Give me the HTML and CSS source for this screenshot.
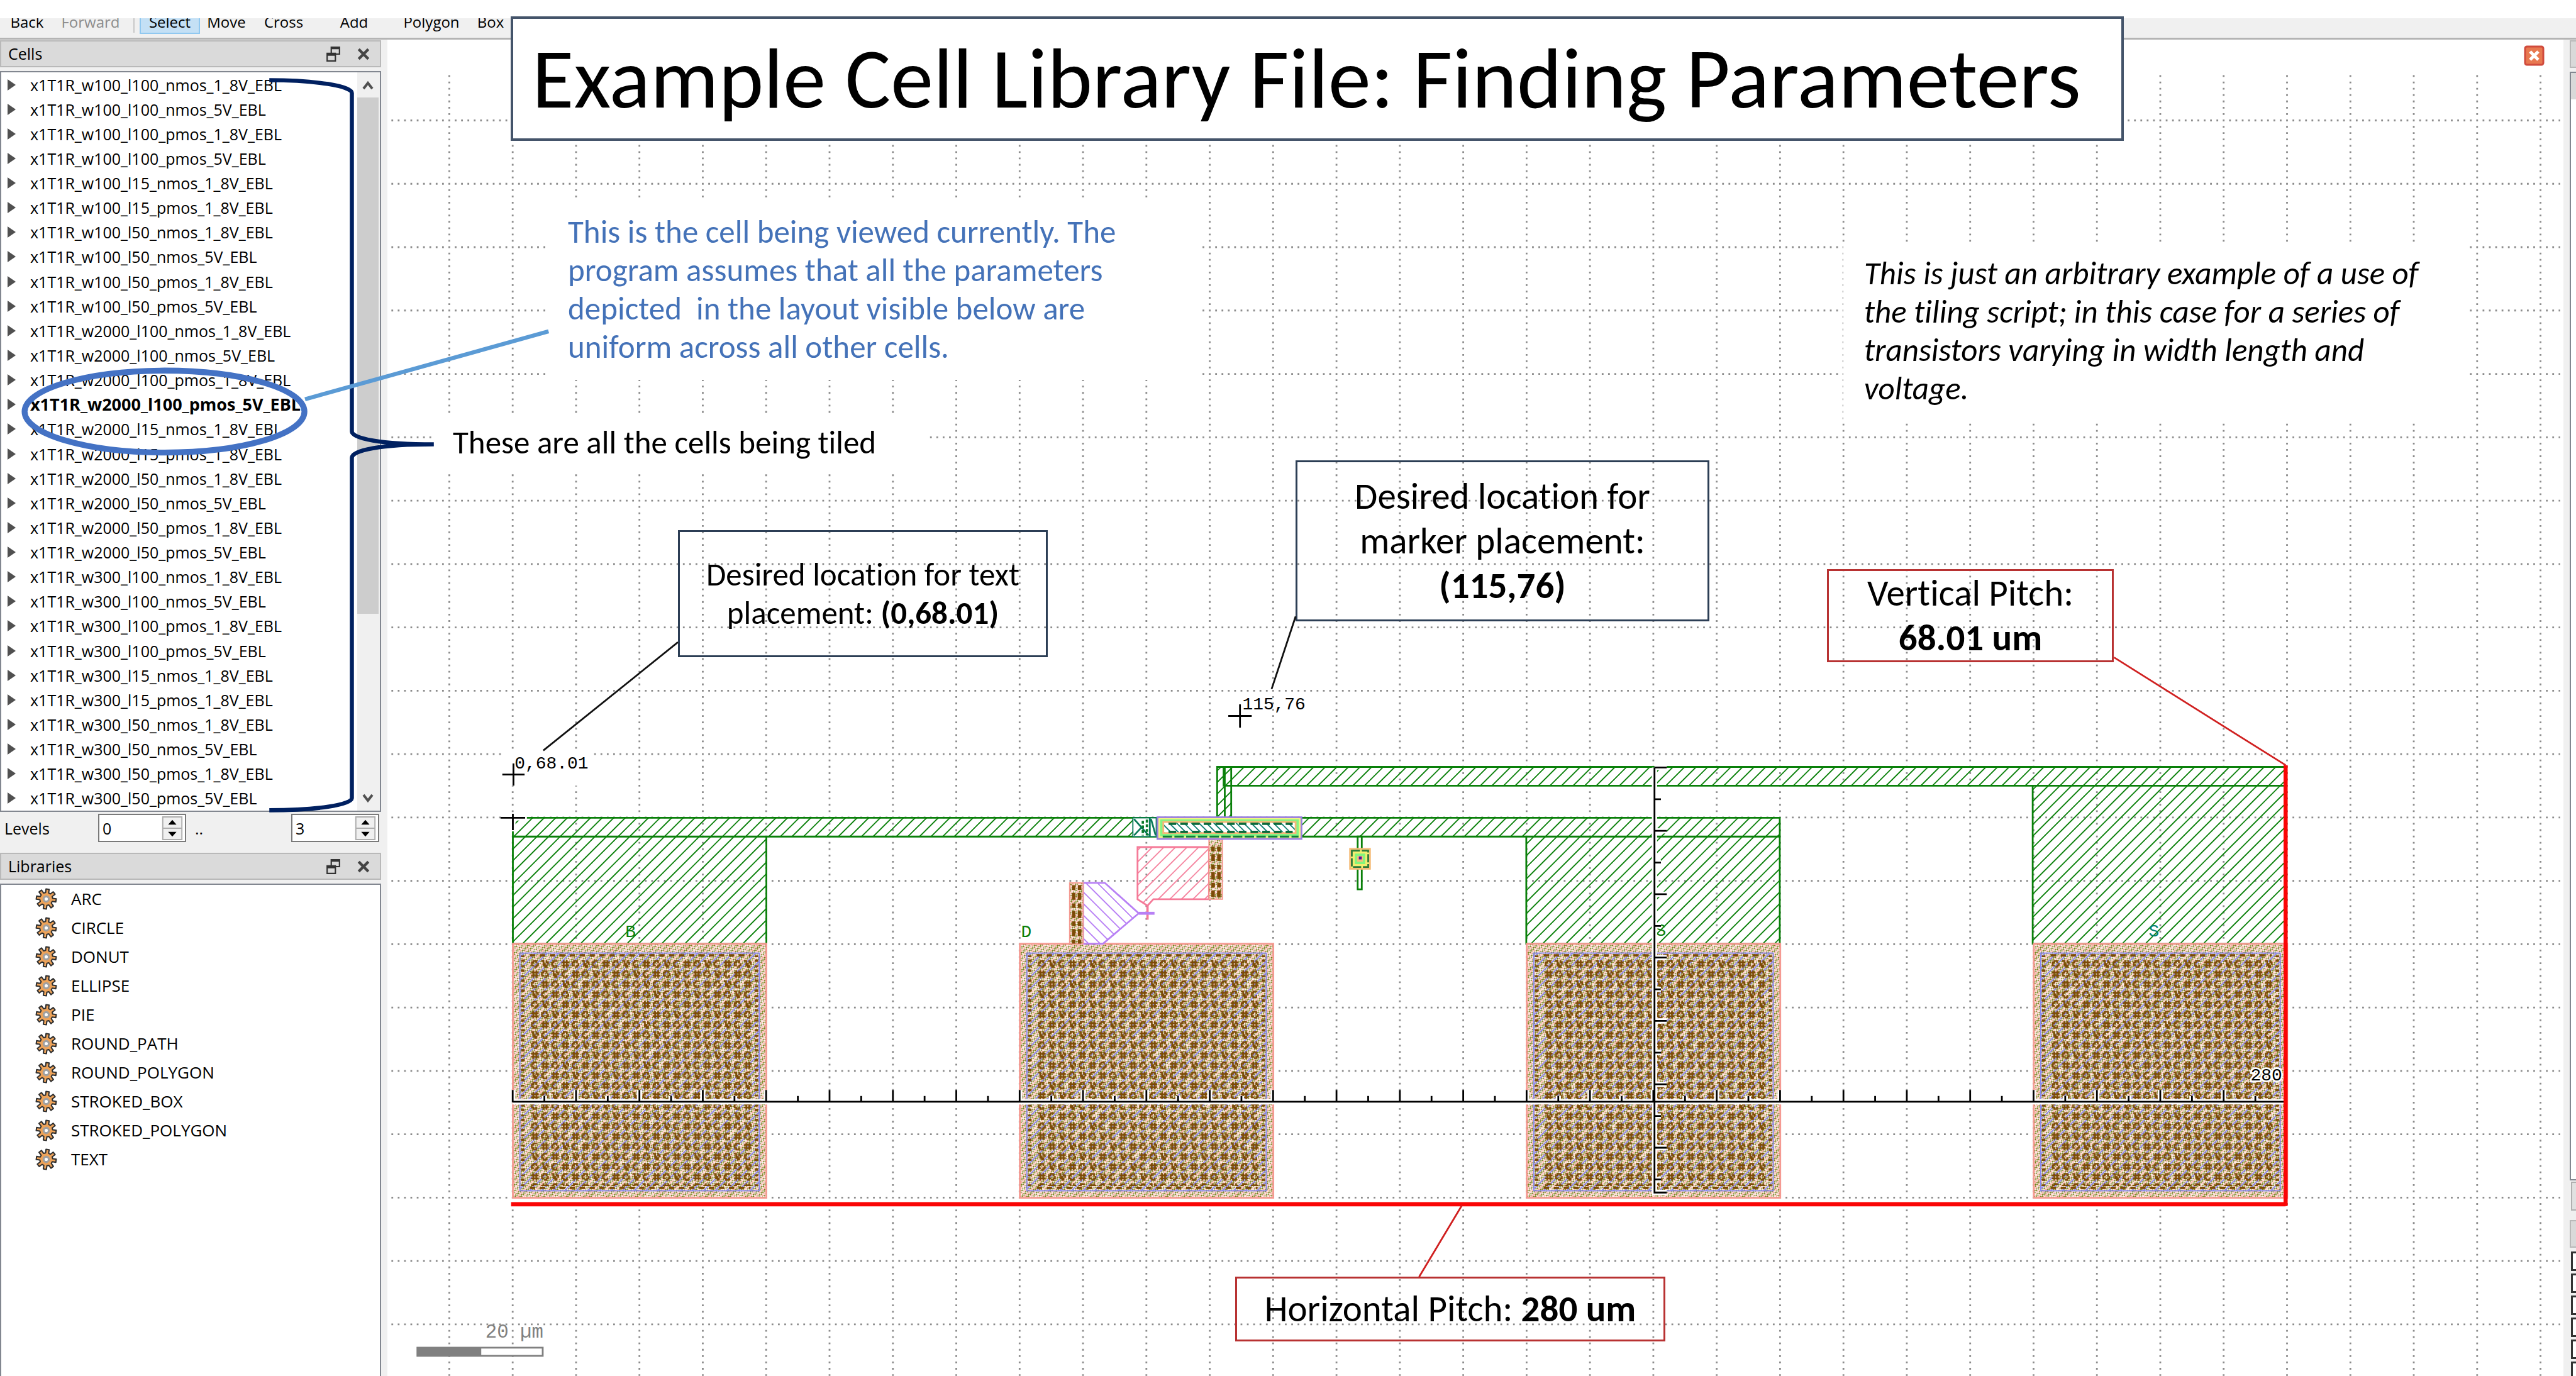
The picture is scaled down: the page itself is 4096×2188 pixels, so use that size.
FILE: index.html
```html
<!DOCTYPE html>
<html lang="en">
<head>
<meta charset="utf-8">
<title>Example Cell Library File: Finding Parameters</title>
<link rel="stylesheet" href="styles.css">
</head>
<body>
<svg class="symbols" aria-hidden="true">
  <symbol id="restore" viewBox="0 0 20 22"><path d="M7 1H19V11H7ZM7 3H19" fill="none" stroke="#333" stroke-width="2"/><path d="M1 10H13V21H1Z" fill="#dadada" stroke="#333" stroke-width="2"/><path d="M1 12H13" stroke="#333" stroke-width="3"/></symbol>
  <symbol id="cross" viewBox="0 0 20 20"><path d="M3 3L17 17M17 3L3 17" fill="none" stroke="#444" stroke-width="4"/></symbol>
  <symbol id="gear" viewBox="-17 -17 34 34"><path id="gear-path" fill="#eda35a" stroke="#2f2f2f" stroke-width="2" stroke-linejoin="round"/><circle r="4" fill="#fff" stroke="#a0a0a0" stroke-width="3"/></symbol>
</svg>

<div class="page">
  <header class="toolbar">
    <button>Back</button><button class="muted">Forward</button><span class="sep"></span><button class="active">Select</button><button>Move</button><button>Cross</button><button>Add</button><button>Polygon</button><button>Box</button>
  </header>

  <div class="main">
    <aside class="sidebar">
      <div class="panel-head"><h2>Cells</h2><button aria-label="Float"><svg><use href="#restore"/></svg></button><button aria-label="Close"><svg><use href="#cross"/></svg></button></div>
      <div class="cells">
        <ul id="cell-list"></ul>
        <div class="scrollbar">
          <svg viewBox="0 0 34 40"><path d="M10 26L17 17L24 26" /></svg>
          <span class="thumb"></span>
          <svg viewBox="0 0 34 40"><path d="M10 15L17 24L24 15" /></svg>
        </div>
      </div>
      <div class="levels">
        <label for="from">Levels</label>
        <span class="spin"><input id="from" value="0"><svg viewBox="0 0 34 40"><path class="box" d="M1 1H33V39H1ZM1 20H33"/><path d="M10 14L17 6L24 14ZM10 26L17 34L24 26Z"/></svg></span>
        <label for="to">..</label>
        <span class="spin"><input id="to" value="3"><svg viewBox="0 0 34 40"><path class="box" d="M1 1H33V39H1ZM1 20H33"/><path d="M10 14L17 6L24 14ZM10 26L17 34L24 26Z"/></svg></span>
      </div>
      <div class="panel-head"><h2>Libraries</h2><button aria-label="Float"><svg><use href="#restore"/></svg></button><button aria-label="Close"><svg><use href="#cross"/></svg></button></div>
      <ul class="libs" id="lib-list"></ul>
    </aside>

    <main class="canvas"></main>

    <aside class="dock">
      <span class="dock-head"></span>
      <span class="dock-list"></span>
      <span class="dock-button"></span>
      <span class="dock-head"></span>
      <span class="swatch"></span><span class="swatch"></span><span class="swatch"></span><span class="swatch"></span><span class="swatch"></span><span class="swatch"></span>
    </aside>
  </div>

  <svg class="layer" viewBox="0 0 4400 2350" id="layout">
    <defs>
      <pattern id="hatch" width="14" height="14" patternUnits="userSpaceOnUse" patternTransform="rotate(45)"><path d="M7 0V14" stroke="#0a800a" stroke-width="2"/></pattern>
      <pattern id="hatch-pink" width="14" height="14" patternUnits="userSpaceOnUse" patternTransform="rotate(45)"><path d="M7 0V14" stroke="#f585a0" stroke-width="2"/></pattern>
      <pattern id="hatch-purple" width="14" height="14" patternUnits="userSpaceOnUse" patternTransform="rotate(-45)"><path d="M7 0V14" stroke="#b880f5" stroke-width="2"/></pattern>
      <pattern id="metal" width="7" height="4" patternUnits="userSpaceOnUse" patternTransform="rotate(45)"><rect width="7" height="4" fill="#fff5f0"/><path d="M0 0H2V2H0ZM2 2H4V4H2Z" fill="#76801a"/><path d="M4 0H5V2H4ZM5 2H7V4H5Z" fill="#fba49c"/></pattern>
      <pattern id="via-stripe" width="14" height="4" patternUnits="userSpaceOnUse" patternTransform="rotate(45)"><path d="M6 0V4" stroke="#8a8af0" stroke-width="2"/></pattern>
      <pattern id="vias" x="905" y="1638" width="69.28" height="69.28" patternUnits="userSpaceOnUse"><path id="via-path" fill="#7c4a06"/></pattern>
      <pattern id="teal" width="9" height="9" patternUnits="userSpaceOnUse" patternTransform="rotate(-45)"><path d="M4 0V9" stroke="#108070" stroke-width="2"/></pattern>
    </defs>
    <path id="grid" class="grid"/>
    <g class="metal">
      <path d="M876 1397H3040V1429H876ZM876 1429H1309V1612H876ZM2607 1429H3040V1612H2607ZM2090 1310H3904V1342H2090ZM3472 1342H3904V1612H3472ZM2079 1310H2103V1397H2079ZM2092 1310V1397"/>
      <path d="M2319 1429H2326V1519H2319Z" fill="#fff"/>
    </g>
    <g id="pads"></g>
    <path d="M1943 1447H2065V1536H1970L1960 1547L1943 1536Z" fill="url(#hatch-pink)" stroke="#f57a98" stroke-width="3"/>
    <path d="M1850 1508H1887L1945 1560L1884 1612H1850Z" fill="url(#hatch-purple)" stroke="#b880f5" stroke-width="3"/>
    <path d="M1960 1547V1571" stroke="#f57a98" stroke-width="4"/>
    <path d="M1945 1560H1972" stroke="#b880f5" stroke-width="5"/>
    <g stroke="#f59a92" stroke-width="2"><rect x="2065" y="1434" width="23" height="102" fill="url(#metal)"/><rect x="1827" y="1508" width="23" height="104" fill="url(#metal)"/></g>
    <g fill="none" stroke="#7c4a06" stroke-width="6" stroke-dasharray="8 5 12 6"><path d="M2072 1446V1532M2082 1446V1532M1834 1512V1612M1844 1512V1612"/></g>
    <rect x="1935" y="1397" width="40" height="32" fill="#fff" stroke="#0a7a5a" stroke-width="2"/>
    <path d="M1937 1399L1962 1427M1950 1413L1937 1427M1964 1397V1429M1966 1399L1974 1427" fill="none" stroke="#0a7a5a" stroke-width="3"/>
    <path d="M1952 1402V1427M1959 1400V1427" stroke="#0a7a2a" stroke-width="4" stroke-dasharray="5 3"/>
    <rect x="1977" y="1396" width="246" height="37" fill="#f3f384" stroke="#9a80e0" stroke-width="3"/>
    <rect x="1984" y="1402" width="232" height="24" fill="#fff" stroke="#84f584" stroke-width="5"/>
    <rect x="1987" y="1404" width="226" height="19" fill="url(#teal)" stroke="#f5b878" stroke-width="3"/>
    <path d="M1996 1407H2208M1996 1421H2208" stroke="#0a6a3a" stroke-width="4" stroke-dasharray="13 7"/>
    <path d="M1986 1429H2218" stroke="#0a803a" stroke-width="3" stroke-dasharray="16 4"/>
    <rect x="2306" y="1450" width="34" height="34" fill="#f3ee70" stroke="#f5bc78" stroke-width="3"/>
    <rect x="2309" y="1453" width="28" height="28" fill="none" stroke="#2a7a3a" stroke-width="3" stroke-dasharray="14 3"/>
    <rect x="2316" y="1460" width="14" height="14" fill="#f5c078" stroke="#84f57c" stroke-width="4"/>
    <rect x="2321" y="1463" width="5" height="5" fill="#5010a0"/>
    <g class="net"><text x="1068" y="1601">B</text><text x="1744" y="1601">D</text><text x="2828" y="1598">S</text><text x="3670" y="1600" fill="#008070">S</text></g>
    <path id="ruler-halo" fill="none" stroke="#fff" stroke-width="9"/>
    <path id="ruler" fill="none" stroke="#000" stroke-width="3"/>
    <rect x="862" y="1284" width="152" height="58" fill="#fff"/>
    <path d="M856 1397H900M876 1390V1420" stroke="#fff" stroke-width="9"/>
    <path d="M858 1323H896M877 1304V1342M855 1397H897M876 1390V1418M2098 1223H2138M2118 1203V1243" stroke="#000" stroke-width="3"/>
    <g class="mono"><text x="879" y="1313">0,68.01</text><text x="2122" y="1212">115,76</text><text class="halo" x="3844" y="1846">280</text><text class="scale" x="829" y="2285">20 µm</text></g>
    <rect x="713" y="2302" width="214" height="14" fill="#fff" stroke="#808080" stroke-width="3"/>
    <rect x="712" y="2301" width="110" height="16" fill="#808080"/>
    <path d="M873 2057H3904M3904 1307V2060" stroke="#fa0505" stroke-width="7"/>
  </svg>

  <button class="close-view" aria-label="Close view"><svg viewBox="0 0 33 33"><rect x="2" y="2" width="29" height="29" rx="3" fill="#e87850" stroke="#d04a3c" stroke-width="3"/><path d="M10 10L23 23M23 10L10 23" stroke="#fff" stroke-width="5"/></svg></button>

  <p class="note blue">This is the cell being viewed currently. The<br>program assumes that all the parameters<br>depicted&nbsp; in the layout visible below are<br>uniform across all other cells.</p>
  <p class="note tiled">These are all the cells being tiled</p>
  <p class="note example">This is just an arbitrary example of a use of<br>the tiling script; in this case for a series of<br>transistors varying in width length and<br>voltage.</p>
  <h1 class="title">Example Cell Library File: Finding Parameters</h1>
  <p class="callout text-at">Desired location for text<br>placement: <b>(0,68.01)</b></p>
  <p class="callout big marker-at">Desired location for<br>marker placement:<br><b>(115,76)</b></p>
  <p class="callout big red v-pitch">Vertical Pitch:<br><b>68.01 um</b></p>
  <p class="callout big red h-pitch">Horizontal Pitch: <b>280 um</b></p>

  <svg class="layer" viewBox="0 0 4400 2350" fill="none">
    <path d="M1158 1097L928 1282M2213 1053L2172 1177" stroke="#111" stroke-width="3"/>
    <path d="M3611 1123L3904 1307M2497 2059L2424 2181" stroke="#d02020" stroke-width="3"/>
    <path d="M460 137C540 137 601 147 601 159V737C601 749 650 759 741 759C650 759 601 769 601 782V1363C601 1375 540 1384 460 1384" stroke="#002060" stroke-width="7"/>
    <ellipse cx="281" cy="703" rx="239" ry="70" stroke="#4472c4" stroke-width="10"/>
    <path d="M521 682L937 566" stroke="#5b9bd5" stroke-width="7"/>
  </svg>
</div>
<script src="app.js"></script>
</body>
</html>
```
FILE: styles.css
```css
* { box-sizing: border-box; margin: 0; padding: 0; }
body { background: #fff; font-family: "Open Sans", "Noto Sans", sans-serif; font-size: 25px; color: #000; overflow: hidden; }
button { border: 0; background: none; font: inherit; color: inherit; }
ul { list-style: none; }
.symbols { position: absolute; width: 0; height: 0; }
.page { position: relative; display: flex; flex-direction: column; height: 100vh; padding-top: 29px; }

.toolbar {
  display: grid; grid-template-columns: 86px 116px 20px 96px 84px 98px 126px 120px 68px;
  align-content: end; height: 34px; flex: none; padding-bottom: 6px; overflow: hidden;
  background: #f0f0f0; border-bottom: 3px solid #b4b4b4; font-size: 24px; line-height: 33px;
}
.toolbar button { padding-bottom: 3px; }
.toolbar .muted { color: #8c8c8c; }
.toolbar .active { background: #c4e0f5; border: 2px solid #90c8f0; border-top: 0; padding-bottom: 1px; }
.toolbar .sep { width: 2px; height: 34px; margin-left: 10px; background: #c8c8c8; }

.main { display: grid; grid-template-columns: 606px 1fr 20px; flex: 1; min-height: 0; }
.sidebar { display: flex; flex-direction: column; padding-top: 1px; background: #f0f0f0; }
.panel-head {
  display: flex; align-items: center; gap: 26px; flex: none; height: 43px; margin-bottom: 6px; padding: 0 15px 0 11px;
  background: #dadada; border: 2px solid #b9b9b9;
}
.panel-head h2 { flex: 1; font-size: 25px; font-weight: 400; line-height: 39px; }
.panel-head button { display: flex; }
.panel-head svg { width: 22px; height: 24px; }

.cells { display: flex; flex: none; height: 1178px; background: #fff; border: 2px solid #828790; }
.cells ul { display: grid; grid-auto-rows: 1fr; flex: 1; }
.cells li { display: flex; align-items: center; white-space: nowrap; padding-left: 10px; gap: 23px; line-height: 36px; }
.cells li svg { width: 13px; height: 18px; flex: none; }
.cells .current { font-weight: 700; font-size: 27px; }
.scrollbar { display: flex; flex-direction: column; width: 36px; padding-right: 2px; background: #f0f0f0; }
.scrollbar svg { width: 34px; height: 40px; fill: none; stroke: #505050; stroke-width: 4px; }
.scrollbar .thumb { height: 821px; margin-bottom: auto; background: #cdcdcd; }

.levels { display: grid; grid-template-columns: 149px 140px 167px 140px; align-items: center; flex: none; height: 65px; padding: 0 0 14px 7px; }
.levels label + .spin + label { padding-left: 14px; }
.spin { display: flex; align-items: center; height: 45px; padding-right: 3px; background: #fff; border: 2px solid #7a7a7a; }
.spin input { flex: 1; min-width: 0; border: 0; padding-left: 5px; font: inherit; background: none; }
.spin svg { width: 34px; height: 38px; }
.spin .box { fill: #f0f0f0; stroke: #adadad; stroke-width: 2px; }

.libs { flex: 1; background: #fff; border: 2px solid #828790; border-bottom: 0; }
.libs li { display: flex; align-items: center; gap: 22px; height: 46px; padding: 0 0 2px 54px; font-size: 26px; }
.libs svg { width: 35px; height: 35px; }

.canvas { background: #fff; border-left: 10px solid #f0f0f0; }
.dock { display: flex; flex-direction: column; padding-left: 10px; padding-top: 1px; background: #f0f0f0; }
.dock-head { height: 44px; margin-bottom: 6px; background: #d9d9d9; border: 2px solid #b9b9b9; border-right: 0; flex: none; }
.dock-list { height: 1763px; flex: none; border: 2px solid #828790; border-right: 0; background: linear-gradient(#d9d9d9 42px, #fff 42px); }
.dock-button { height: 46px; margin: 2px 0 15px 2px; flex: none; background: #e1e1e1; border: 2px solid #b0b0b0; border-right: 0; }
.swatch { height: 31px; margin: 0 0 4px 2px; flex: none; background: #fff; border: 3px solid #333; border-right: 0; }

.layer { position: absolute; left: 0; top: 0; width: 100%; pointer-events: none; }
.grid { fill: none; stroke: #8c8c8c; stroke-width: 3px; }
.metal { fill: url(#hatch); stroke: #0a800a; stroke-width: 3px; }
.net, .mono { font-family: "Liberation Mono", monospace; font-size: 30px; }
.net { fill: #0a800a; }
.halo { paint-order: stroke; stroke: #fff; stroke-width: 6px; }
.scale { fill: #808080; font-size: 33px; }

.close-view { position: absolute; right: 50px; top: 72px; width: 33px; height: 33px; }

.note, .callout, .title { position: absolute; font-family: Calibri, Carlito, Lato, sans-serif; font-size: 51px; line-height: 61px; white-space: nowrap; font-variant-ligatures: none; }
.note { background: #fff; }
.blue { left: 867px; top: 321px; width: 1044px; height: 283px; padding: 17px 36px; color: #4472b8; }
.tiled { left: 689px; top: 657px; width: 788px; height: 97px; padding: 16px 31px; }
.example { left: 2931px; top: 385px; width: 994px; height: 284px; padding: 19px 33px; font-style: italic; }
.title { left: 812px; top: 26px; width: 2565px; height: 198px; padding: 12px 30px; background: #fff; border: 4px solid #44546a; font-size: 136px; line-height: 166px; font-weight: 400; }
.callout { text-align: center; border: 3px solid #2c3e55; }
.big { font-size: 59px; line-height: 71px; }
.red { border-color: #b83232; }
.text-at { left: 1078px; top: 843px; width: 588px; padding: 37px 0; }
.marker-at { left: 2060px; top: 732px; width: 658px; padding: 19px 0 18px; }
.v-pitch { left: 2905px; top: 905px; width: 456px; }
.h-pitch { left: 1964px; top: 2030px; width: 684px; padding: 13px 0; }
```
FILE: app.js
```javascript
const el = id => document.getElementById(id);

// Cell tree
const variants = ['l100_nmos_1_8V', 'l100_nmos_5V', 'l100_pmos_1_8V', 'l100_pmos_5V', 'l15_nmos_1_8V',
  'l15_pmos_1_8V', 'l50_nmos_1_8V', 'l50_nmos_5V', 'l50_pmos_1_8V', 'l50_pmos_5V'];
const current = 'x1T1R_w2000_l100_pmos_5V_EBL';
const arrow = '<svg viewBox="0 0 13 18"><path d="M0 0L13 9L0 18Z" fill="#505050"/></svg>';
el('cell-list').innerHTML = ['w100', 'w2000', 'w300'].flatMap(w => variants.map(v => `x1T1R_${w}_${v}_EBL`))
  .map(n => `<li${n === current ? ' class="current"' : ''}>${arrow}<span>${n}</span></li>`).join('');

// Library list
el('lib-list').innerHTML = ['ARC', 'CIRCLE', 'DONUT', 'ELLIPSE', 'PIE', 'ROUND_PATH', 'ROUND_POLYGON',
  'STROKED_BOX', 'STROKED_POLYGON', 'TEXT']
  .map(n => `<li><svg><use href="#gear"/></svg><span>${n}</span></li>`).join('');

// Gear outline with eight teeth
let gear = '';
for (let i = 0; i < 8; i++) {
  [[-14, 10], [-9, 15.5], [9, 15.5], [14, 10]].forEach(([d, r], k) => {
    const a = (i * 45 + d + 8) * Math.PI / 180;
    gear += (i + k ? 'L' : 'M') + (r * Math.cos(a)).toFixed(1) + ' ' + (r * Math.sin(a)).toFixed(1);
  });
}
el('gear-path').setAttribute('d', gear + 'Z');

// Dotted grid: a line every 10 um, a dot every 1 um
const um = 10.824, x0 = 875.7, y0 = 205.7;
let grid = '';
for (let k = -1; k <= 32; k++) grid += `M${x0 + k * 10 * um} ${y0 - 7 * um - 1.5}V2350`;
for (let k = 0; k <= 19; k++) grid += `M${x0 - 19 * um - 1.5} ${y0 + k * 10 * um}H4373`;
el('grid').setAttribute('d', grid);
el('grid').setAttribute('stroke-dasharray', `3 ${um - 3}`);

// Rulers
let ruler = 'M875 1882H3904M2826 1311V2037H2847';
for (let k = 0; k <= 55; k++) ruler += `M${x0 + k * 5 * um} 1882V${k % 2 ? 1872 : 1862}`;
for (let k = 0; k <= 13; k++) ruler += `M2826 ${1311 + k * 5 * um}H${k % 2 ? 2837 : 2847}`;
el('ruler').setAttribute('d', ruler);
el('ruler-halo').setAttribute('d', ruler);

// Via array: small contact shapes repeated over every pad
const shapes = ['01110 11010 10001 11011 00110', '01010 11111 01010 11111 01010', '01110 11000 10000 11010 01110', '11010 01011 01101 01110 00110'];
let via = '';
for (let i = 0; i < 16; i++) {
  const rows = shapes[(i * 3 + (i >> 2)) % 4].split(' ');
  const cx = (i % 4) * 17.32 + 2, cy = (i >> 2) * 17.32 + 2;
  rows.forEach((r, y) => [...r].forEach((b, x) => { if (b === '1') via += `M${cx + x * 2.6} ${cy + y * 2.6}h2.8v2.8h-2.8z`; }));
}
el('via-path').setAttribute('d', via);
el('pads').innerHTML = [0, 80, 160, 240].map(p => `<g transform="translate(${p * um} 0)">
  <rect x="876" y="1612" width="433" height="434" fill="url(#metal)" stroke="#f59a92" stroke-width="3"/>
  <rect x="888" y="1628" width="409" height="406" fill="url(#via-stripe)"/>
  <path d="M893 1632V2030M1292 1632V2030" stroke="#7c4a06" stroke-width="6" stroke-dasharray="3 4 4 6"/>
  <path d="M905 1632H1282M905 2029H1282" stroke="#7c4a06" stroke-width="4" stroke-dasharray="9 8"/>
  <rect x="905" y="1638" width="380" height="388" fill="url(#vias)"/>
  <rect x="888" y="1628" width="409" height="406" fill="none" stroke="#8a8af0" stroke-width="2"/></g>`).join('');
```
